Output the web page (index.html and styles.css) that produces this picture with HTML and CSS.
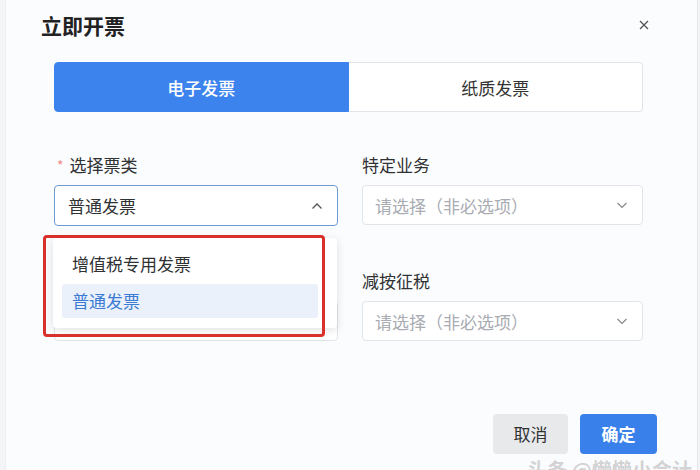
FILE: index.html
```html
<!DOCTYPE html>
<html lang="zh-CN">
<head>
<meta charset="utf-8">
<title>立即开票</title>
<link rel="stylesheet" href="styles.css">
</head>
<body>
<div class="dialog">
  <div class="header">
    <div class="title">立即开票</div>
    <svg class="close" width="10" height="10" viewBox="0 0 10 10"><path d="M1 1L9 9M9 1L1 9" stroke="#555" stroke-width="1.3" fill="none"/></svg>
  </div>
  <div class="tabs">
    <div class="tab active">电子发票</div>
    <div class="tab">纸质发票</div>
  </div>
  <div class="form">
    <div class="field">
      <div class="label"><span class="req">*</span>选择票类</div>
      <div class="select focused">
        <span class="value">普通发票</span>
        <svg class="chev" width="12" height="8" viewBox="0 0 12 8"><path d="M1.5 6.5L6 2L10.5 6.5" stroke="#555" stroke-width="1.3" fill="none"/></svg>
      </div>
      <div class="menu">
        <div class="item">增值税专用发票</div>
        <div class="item selected">普通发票</div>
      </div>
      <div class="mark"></div>
    </div>
    <div class="field">
      <div class="label">特定业务</div>
      <div class="select">
        <span class="placeholder">请选择（非必选项）</span>
        <svg class="chev" width="12" height="8" viewBox="0 0 12 8"><path d="M1.5 2L6 6.5L10.5 2" stroke="#888" stroke-width="1.2" fill="none"/></svg>
      </div>
    </div>
    <div class="field">
      <div class="label"></div>
      <div class="select">
        <span class="placeholder"></span>
      </div>
    </div>
    <div class="field">
      <div class="label">减按征税</div>
      <div class="select">
        <span class="placeholder">请选择（非必选项）</span>
        <svg class="chev" width="12" height="8" viewBox="0 0 12 8"><path d="M1.5 2L6 6.5L10.5 2" stroke="#888" stroke-width="1.2" fill="none"/></svg>
      </div>
    </div>
  </div>
  <div class="footer">
    <div class="btn cancel">取消</div>
    <div class="btn ok">确定</div>
  </div>
  <div class="watermark">头条 @懒懒小会计</div>
</div>
</body>
</html>
```

FILE: styles.css
```css
html, body {
  margin: 0;
  padding: 0;
  background: #f4f5f7;
  font-family: "Noto Sans CJK SC", "Noto Sans", sans-serif;
  color: #303133;
}
.dialog {
  position: relative;
  margin: 0 2px 0 5px;
  height: 470px;
  background: #fbfcfe;
  border-left: 1px solid #eceef2;
  border-right: 1px solid #e4e6ea;
  box-sizing: border-box;
  overflow: hidden;
}
.header {
  display: flex;
  align-items: center;
  justify-content: space-between;
  padding: 12px 48px 0 35px;
  height: 26px;
  margin-bottom: 24px;
}
.title {
  font-size: 21px;
  line-height: 26px;
  font-weight: 600;
  color: #222;
}
.close {
  display: block;
}
.tabs {
  display: grid;
  grid-template-columns: 1fr 1fr;
  margin: 0 54px 0 48px;
  height: 50px;
}
.tab {
  display: flex;
  align-items: center;
  justify-content: center;
  font-size: 17px;
  color: #333;
  background: #fff;
  border: 1px solid #e1e4e9;
  border-left: none;
  border-radius: 0 4px 4px 0;
}
.tab.active {
  background: #3d83ee;
  color: #fff;
  font-weight: 500;
  border: 1px solid #3d83ee;
  border-radius: 4px 0 0 4px;
}
.form {
  display: grid;
  grid-template-columns: 284px 281px;
  column-gap: 24px;
  row-gap: 43px;
  margin: 41px 48px 0;
}
.field {
  position: relative;
}
.label {
  height: 24px;
  line-height: 24px;
  font-size: 17px;
  color: #303133;
  margin-bottom: 8px;
}
.req {
  color: #f08a8a;
  font-size: 14px;
  margin: 0 6px 0 3px;
  vertical-align: top;
}
.select {
  display: flex;
  align-items: center;
  justify-content: space-between;
  height: 40px;
  box-sizing: border-box;
  border: 1px solid #e1e4e9;
  border-radius: 4px;
  background: #fff;
  padding: 0 14px 0 12px;
  font-size: 17px;
}
.select.focused {
  border-color: #6e9ad0;
  height: 41px;
  padding: 0 14px 0 13px;
}
.value {
  color: #303133;
}
.placeholder {
  color: #a9acb2;
}
.chev {
  display: block;
}
.menu {
  position: absolute;
  left: -1px;
  top: 85px;
  width: 284px;
  box-sizing: border-box;
  padding: 9px 19px 10px 9px;
  background: #fff;
  border-radius: 4px;
  box-shadow: 0 2px 10px rgba(0, 0, 0, 0.12);
  z-index: 2;
}
.item {
  height: 34px;
  line-height: 34px;
  padding-left: 10px;
  font-size: 17px;
  color: #303133;
}
.item + .item {
  margin-top: 3px;
}
.item.selected {
  background: #ebf1fa;
  color: #3b7bd4;
  border-radius: 3px;
}
.mark {
  position: absolute;
  left: -11px;
  top: 82px;
  width: 282px;
  height: 102px;
  box-sizing: border-box;
  border: 3px solid #d8302a;
  border-radius: 4px;
  z-index: 3;
}
.footer {
  display: flex;
  justify-content: flex-end;
  gap: 12px;
  margin-top: 73px;
  padding-right: 40px;
}
.btn {
  height: 40px;
  line-height: 40px;
  text-align: center;
  font-size: 17px;
  border-radius: 4px;
}
.cancel {
  width: 75px;
  background: #e8e9eb;
  color: #303133;
}
.ok {
  width: 77px;
  background: #3a80ea;
  color: #fff;
  font-weight: 600;
}
.watermark {
  position: absolute;
  right: 5px;
  bottom: -14px;
  font-size: 20px;
  color: rgba(160, 160, 160, 0.45);
  font-weight: 600;
}
```
